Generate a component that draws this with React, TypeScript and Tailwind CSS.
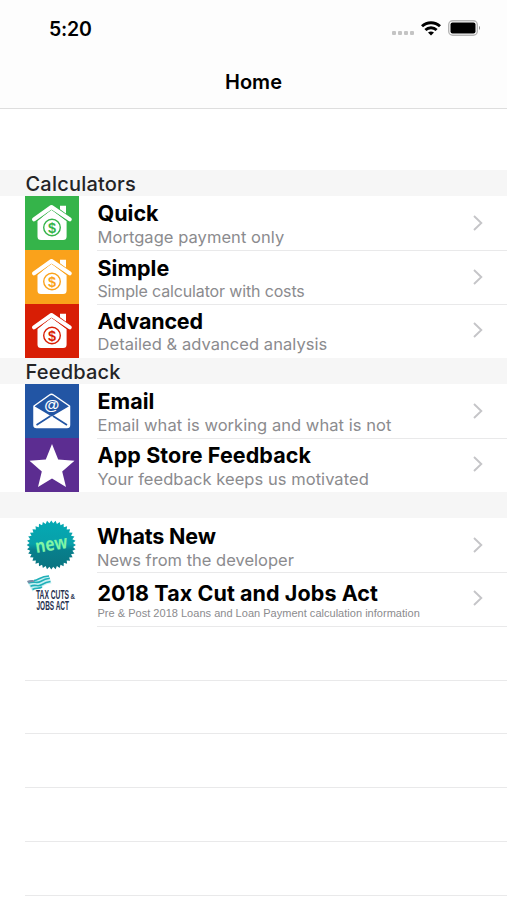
import { ReactNode } from "react";
import clsx from "clsx";

type RowProps = {
  icon: ReactNode;
  title: string;
  subtitle: string;
  titleClass: string;
  subtitleClass: string;
  last?: boolean;
};

function HouseIcon({ color }: { color: string }) {
  return (
    <svg width="54" height="54" viewBox="0 0 54 54" className="block">
      <rect width="54" height="54" fill={color} />
      <path d="M35 9.7h6v9l-6-4.8z" fill="#fff" />
      <path
        d="M26.5 13.5 41.6 25v15.500a3.500 3.500 0 0 1-3.500 3.500H16a3.500 3.500 0 0 1-3.500-3.500V25z"
        fill="#fff"
      />
      <path d="M7.500 24.800 26.500 10.500 46 24.800" fill="none" stroke={color} strokeWidth="5.600" />
      <path
        d="M9 23.300 26.500 11 44.800 23.300"
        fill="none"
        stroke="#fff"
        strokeWidth="4"
        strokeLinecap="round"
        strokeLinejoin="round"
      />
      <path d="M26.500 14.500 36 21.500H17z" fill="#fff" />
      <circle cx="27" cy="31.500" r="8.300" fill="none" stroke={color} strokeWidth="1.400" />
      <text
        x="27"
        y="36.700"
        textAnchor="middle"
        fontSize="14.500"
        fontWeight="700"
        fill={color}
        className="font-['Liberation_Sans',sans-serif]"
      >
        $
      </text>
    </svg>
  );
}

function EmailIcon() {
  return (
    <svg width="54" height="54" viewBox="0 0 54 54" className="block">
      <rect width="54" height="54" fill="#2255a4" />
      <path
        d="M9 22 24.500 11q2-1.400 4 0L44.500 22V41q0 2.500-2.500 2.500H11.500Q9 43.500 9 41z"
        fill="#2255a4"
        stroke="#fff"
        strokeWidth="1.500"
        strokeLinejoin="round"
      />
      <path d="M9 22 26.700 32.500 44.500 22V41q0 2.500-2.500 2.500H11.500Q9 43.500 9 41z" fill="#fff" />
      <path d="M11.500 41 25.500 32M42 41 28 32" stroke="#2255a4" strokeWidth="1.700" />
      <text
        x="26.700"
        y="25.500"
        textAnchor="middle"
        fontSize="15.500"
        fontWeight="700"
        fill="#fff"
        className="font-['Liberation_Sans',sans-serif]"
      >
        @
      </text>
    </svg>
  );
}

function StarIcon() {
  return (
    <svg width="54" height="54" viewBox="0 0 54 54" className="block">
      <rect width="54" height="54" fill="#5c2d91" />
      <path
        d="M27 6 33.200 21.500 49.500 22.800 37.200 33.400 41 49 27 40.500 13 49 16.800 33.400 4.500 22.800 20.800 21.500z"
        fill="#fff"
      />
    </svg>
  );
}

function NewIcon() {
  // saw-tooth edge of the badge
  const teeth = 36;
  const points = Array.from({ length: teeth * 2 }, (_, i) => {
    const r = i % 2 === 0 ? 24.6 : 21.8;
    const a = (i * Math.PI) / teeth;
    return `${(26.3 + r * Math.cos(a)).toFixed(2)},${(27 + r * Math.sin(a)).toFixed(2)}`;
  }).join(" ");

  return (
    <svg width="54" height="54" viewBox="0 0 54 54" className="block">
      <defs>
        <linearGradient id="badge" x1="0" y1="0" x2="0" y2="1">
          <stop offset="0" stopColor="#04a9b3" />
          <stop offset="0.48" stopColor="#08a0aa" />
          <stop offset="0.6" stopColor="#087f8c" />
          <stop offset="1" stopColor="#0a7480" />
        </linearGradient>
      </defs>
      <polygon points={points} fill="url(#badge)" />
      <text
        x="26.500"
        y="32.500"
        textAnchor="middle"
        fontSize="18.500"
        fontWeight="700"
        fill="#80f5a5"
        textLength="32.500"
        lengthAdjust="spacingAndGlyphs"
        transform="rotate(-9 26 27)"
        className="font-['Open_Sans',sans-serif]"
      >
        new
      </text>
    </svg>
  );
}

function TaxIcon() {
  return (
    <svg width="54" height="54" viewBox="0 0 54 54" className="block overflow-visible">
      <path d="M2 8c5-3 8 0 12-2s6-4 10-4l2.500 8c-5 0-7 2-10 4s-6 1-9 4z" fill="#c9f0f2" transform="translate(0 1.500)" />
      <path
        d="M9 8.500c5-.5 6-4 15-4.500M3.500 11c6-2.500 8 1 12-1.500s5-3 9.300-3.300M5.500 14.300c5-2.500 7 1 11-1.500s5-3 9-3.300M7.500 17.500c4-2.500 6 0 9.500-2.500"
        fill="none"
        stroke="#20b0b9"
        strokeWidth="1.600"
      />
      <path d="M2 9q3-1.500 6.500-1l1 2.200q-3-.5-6.200 1z" fill="#7d8ba5" />
      <g fill="#27314f" fontWeight="700" className="font-['Liberation_Sans',sans-serif]">
        <text x="11" y="27" fontSize="12" textLength="33" lengthAdjust="spacingAndGlyphs">
          TAX CUTS
        </text>
        <text x="45.500" y="27" fontSize="7" textLength="4.500" lengthAdjust="spacingAndGlyphs">
          &amp;
        </text>
        <text x="11.500" y="38.200" fontSize="12" textLength="32.500" lengthAdjust="spacingAndGlyphs">
          JOBS ACT
        </text>
      </g>
    </svg>
  );
}

function Chevron() {
  return (
    <svg width="10" height="16" viewBox="0 0 10 16" fill="none" stroke="#c5c5c8" strokeWidth="1.900" className="mb-px">
      <path d="m1 1 7.300 7L1 15" />
    </svg>
  );
}

function Row({ icon, title, subtitle, titleClass, subtitleClass, last }: RowProps) {
  return (
    <div className="flex h-[53.8px] pl-[25px]">
      <div className="w-[54px] shrink-0">{icon}</div>
      <div
        className={clsx(
          "ml-[18px] flex h-[54.8px] flex-1 items-center justify-between border-b pr-[24.5px]",
          last ? "border-transparent" : "border-[#e9e9ea]",
        )}
      >
        <div className="h-full whitespace-nowrap">
          <h2 className={clsx("h-[25px] text-[21.5px] leading-[25px] font-bold text-black", titleClass)}>
            {title}
          </h2>
          <p className={clsx("text-[#8b8b8e]", subtitleClass)}>{subtitle}</p>
        </div>
        <Chevron />
      </div>
    </div>
  );
}

function SectionHeader({ children }: { children?: ReactNode }) {
  return (
    <div className="h-[26.4px] bg-[#f6f6f6] pl-[25.5px] text-[20px] leading-[28px] font-medium tracking-[0.2px] text-[#242426]">
      {children}
    </div>
  );
}

function StatusBar() {
  return (
    <div className="flex h-14 items-center justify-between pr-[26px] pl-[49px]">
      <span className="pt-[3px] text-[19.5px] font-semibold tracking-[-0.2px]">5:20</span>
      <div className="flex items-center">
        <div className="mt-[9px] mr-[7px] flex gap-[2px]">
          <i className="size-1 rounded-[1px] bg-[#c4c4c4]" />
          <i className="size-1 rounded-[1px] bg-[#c4c4c4]" />
          <i className="size-1 rounded-[1px] bg-[#c4c4c4]" />
          <i className="size-1 rounded-[1px] bg-[#c4c4c4]" />
        </div>
        <svg width="20" height="15" viewBox="0 0 20 15" fill="none" stroke="#000" strokeWidth="2.900">
          <path d="M1 5.300a13 13 0 0 1 18 0M4.400 9a8 8 0 0 1 11.200 0" />
          <path d="M7 11.500q3-2.200 6 0L10 14.500z" fill="#000" stroke="none" />
        </svg>
        <svg width="33" height="16" viewBox="0 0 33 16" className="ml-[7px]">
          <rect x="0.700" y="0.700" width="28.600" height="14.600" rx="4" fill="#fff" stroke="#b5b5b5" strokeWidth="1.400" />
          <rect x="2.500" y="2.500" width="25" height="11" rx="2" />
          <path d="M31 5.800q2 2.200 0 4.400z" fill="#888" />
        </svg>
      </div>
    </div>
  );
}

export default function App() {
  return (
    <div className="h-[900px] w-[507px] overflow-hidden bg-white font-['Inter',sans-serif] text-black">
      <header className="h-[109px] border-b border-[#dedede] bg-[#fdfdfd]">
        <StatusBar />
        <h1 className="mt-[11px] text-center text-[20px] leading-[30px] font-semibold">Home</h1>
      </header>

      <main className="pt-[61px]">
        <SectionHeader>Calculators</SectionHeader>
        <Row
          icon={<HouseIcon color="#35b44a" />}
          title="Quick"
          subtitle="Mortgage payment only"
          titleClass="mt-[5px] pl-[0.5px]"
          subtitleClass="pl-[0.5px] text-[16.5px] leading-[22px] tracking-[0.05px]"
        />
        <Row
          icon={<HouseIcon color="#faa21b" />}
          title="Simple"
          subtitle="Simple calculator with costs"
          titleClass="mt-[6px] pl-[0.5px]"
          subtitleClass="pl-[0.5px] text-[16px] leading-[20px] tracking-[-0.15px]"
        />
        <Row
          icon={<HouseIcon color="#d81e05" />}
          title="Advanced"
          subtitle="Detailed & advanced analysis"
          titleClass="mt-[5px] pl-[0.5px] tracking-[-0.2px]"
          subtitleClass="pl-[0.5px] text-[16.5px] leading-[21px] tracking-[0.05px]"
          last
        />

        <SectionHeader>Feedback</SectionHeader>
        <Row
          icon={<EmailIcon />}
          title="Email"
          subtitle="Email what is working and what is not"
          titleClass="mt-[5px] pl-[0.5px]"
          subtitleClass="pl-[0.5px] text-[16.5px] leading-[22px] tracking-[0.05px]"
        />
        <Row
          icon={<StarIcon />}
          title="App Store Feedback"
          subtitle="Your feedback keeps us motivated"
          titleClass="mt-[5px] pl-[0.5px] tracking-[0.1px]"
          subtitleClass="pl-[0.5px] text-[16.5px] leading-[22px] tracking-[0.05px]"
          last
        />

        <SectionHeader />
        <Row
          icon={<NewIcon />}
          title="Whats New"
          subtitle="News from the developer"
          titleClass="mt-[5.500px] tracking-[-0.150px]"
          subtitleClass="text-[16.5px] leading-[22px]"
        />
        <Row
          icon={<TaxIcon />}
          title="2018 Tax Cut and Jobs Act"
          subtitle="Pre & Post 2018 Loans and Loan Payment calculation information"
          titleClass="mt-[9px] pl-[0.5px] tracking-[0.080px]"
          subtitleClass="pl-[0.5px] font-['Liberation_Sans',sans-serif] text-[11px] leading-[15px] tracking-[0.02px]"
        />

        <div className="ml-[25px] pt-px">
          {[1, 2, 3, 4, 5].map((n) => (
            <div key={n} className="h-[53.8px] border-b border-[#e9e9ea]" />
          ))}
        </div>
      </main>
    </div>
  );
}
